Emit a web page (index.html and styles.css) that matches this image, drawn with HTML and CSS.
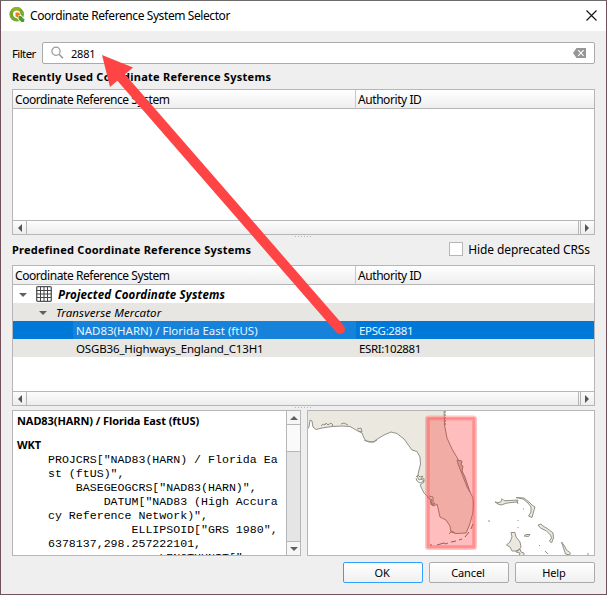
FILE: index.html
```html
<!DOCTYPE html>
<html lang="en">
<head>
<meta charset="utf-8">
<title>Coordinate Reference System Selector</title>
<link rel="stylesheet" href="styles.css">
</head>
<body>
<div class="dialog">
  <header class="titlebar">
    <svg class="logo" width="16" height="16" viewBox="0 0 16 16"><circle cx="7.7" cy="7.3" r="5.5" fill="none" stroke="#75a82b" stroke-width="3.6"/><path d="M3.2 3.5A5.8 5.8 0 0 1 11 2.7" fill="none" stroke="#93b023" stroke-width="3"/><path d="M7.500 7.500h4l4 4v4h-3.500l-4.500-4.500z" fill="#fff"/><path d="M9.500 9h2.500l3.200 3.200v2.800h-2.800L9.500 12z" fill="#589632"/><path d="M6.500 5.500h3.600l1.200 3H9v2.300l-2.500-1.600z" fill="#ee7913"/></svg>
    <span class="title">Coordinate Reference System Selector</span>
    <svg class="close" width="11" height="11" viewBox="0 0 11 11"><path d="M.5.5l10 10M10.500.5l-10 10" stroke="#111" stroke-width="1.1"/></svg>
  </header>
  <main>
    <div class="filter-row">
      <label class="filter-label">Filter</label>
      <div class="filter">
        <svg width="14" height="14" viewBox="0 0 14 14"><circle cx="5" cy="5.300" r="4.100" fill="none" stroke="#999" stroke-width="1.2"/><path d="M8 8.300l4 4" stroke="#999" stroke-width="1.6"/></svg>
        <span class="query">2881</span>
        <svg width="13" height="10" viewBox="0 0 13 10"><path d="M0 5l3.500-5H13v10H3.500z" fill="#969696"/><path d="M5.200 2.200l5.400 5.600M10.600 2.200L5.200 7.800" stroke="#fff" stroke-width="1.1"/></svg>
      </div>
    </div>
    <h2 class="heading recent-heading"><span>Recently Used Coordinate Reference Systems</span></h2>
    <section class="table recent">
      <div class="thead"><span>Coordinate Reference System</span><span>Authority ID</span></div>
      <div class="tbody"></div>
      <div class="hscroll"><i class="cell"><b class="left"></b></i><i class="thumb"></i><i class="cell"><b class="right"></b></i></div>
    </section>
    <div class="splitter"></div>
    <div class="predefined-row">
      <h2 class="heading"><span class="predefined">Predefined Coordinate Reference Systems</span></h2>
      <label class="hide"><i class="box"></i><span>Hide deprecated CRSs</span></label>
    </div>
    <section class="table all">
      <div class="thead"><span>Coordinate Reference System</span><span>Authority ID</span></div>
      <div class="tbody">
        <div class="row group"><b class="down"></b>
          <svg width="16" height="16" viewBox="0 0 16 16"><rect x=".7" y=".7" width="14.6" height="14.6" rx="1" fill="#fff" stroke="#555" stroke-width="1.3"/><path d="M4.500 1v14M8 1v14M11.500 1v14M1 4.500h14M1 8h14M1 11.500h14" stroke="#444"/></svg>
          <span>Projected Coordinate Systems</span></div>
        <div class="row alt sub"><b class="down"></b><span>Transverse Mercator</span></div>
        <div class="row item selected"><span class="name"><em class="florida">NAD83(HARN) / Florida East (ftUS)</em></span><span class="auth"><em class="epsg">EPSG:2881</em></span></div>
        <div class="row item alt"><span class="name"><em class="osgb">OSGB36_Highways_England_C13H1</em></span><span class="auth"><em class="esri">ESRI:102881</em></span></div>
      </div>
      <div class="hscroll"><i class="cell"><b class="left"></b></i><i class="thumb"></i><i class="cell"><b class="right"></b></i></div>
    </section>
    <div class="splitter low"></div>
    <div class="details">
      <section class="wkt">
        <div class="wkt-text">
          <h3 class="crs-name">NAD83(HARN) / Florida East (ftUS)</h3>
          <h3 class="wkt-title">WKT</h3>
<pre>PROJCRS["NAD83(HARN) / Florida Ea
st (ftUS)",
    BASEGEOGCRS["NAD83(HARN)",
        DATUM["NAD83 (High Accura
cy Reference Network)",
            ELLIPSOID["GRS 1980",
6378137,298.257222101,
                LENGTHUNIT["</pre>
        </div>
        <div class="vscroll"><i class="vcell"><b class="up"></b></i><i class="vthumb"></i><i class="track"></i><i class="vcell bottom"><b class="down"></b></i></div>
      </section>
      <svg class="map" width="288" height="146" viewBox="307 410 288 146">
        <g fill="#ebe9df" stroke="#929187" stroke-width="1" stroke-linejoin="round">
          <path d="M307 409L307 429.500 309 427 310 420 312 421 313 427 316 429.500 322 428 332 426.500 342 426 350 426.500 356 430 362 433 364 438 366 441 373 442 379 438 384 435 391 432 397 433.500 404 439 412 450 417 451.500 420 457 420.500 464 419 470 417.500 477 419 480 424 478.500 424 482 420 485 424 493 428 497 430 499 431 504 434 506 437 504 438 508 440 517 446 520 450 526 451 532 456 533.500 466 533 469 526 471 520 473 512 473.500 503 473 498 469 490 465 479 461 468 459 461 452 449 447 438 444.500 425 444 409z"/>
          <path d="M321 426l2-2 2 1 1-2 2 2 3-2 2 2-2 2M341 424l3-1 4 2M357 429l4-1 1 4-4-1M364 440l5 2h5l3-2M416 477l2-2 2 2 3-1-2 3 3 2-4 2-3-2-1-3M427 497l5 3-1 5 4-2M429 496l4 1v9l2-3M449 534l3-3 3 2" fill="none"/>
          <path d="M457 460l5 1-1 4 2 1-1 5 3 6 5 15-3-5-5-13-4-10z" fill="#c9c5b9"/>
          <path d="M445 411v14" fill="none" stroke-dasharray="2 1" stroke-width="1.500"/>
          <path d="M430 545h2m5 0l7-2 2 1 2-1m3-1l5-1m3-1l3-1m3-2l4-5m2-3l2-5" fill="none" stroke="#777"/>
          <path d="M495 502l3 2 3 1 6-2 10-1 1-2-8 .5-6 .2-2-2-1 3-3 1z"/>
          <path d="M516 497.500L524 498 529 502 532 505 535 507 533.500 512 532 517.500 528.500 516 531 512 531 507 528 503 523 499z"/>
          <path d="M511 532.500H515L516 537 520 542 521 547 518 551H512L510 547 506.500 545 510 542 512 537zM516 551l4-2 1 3 3 1v3h-5l1-3-4-1z"/>
          <path d="M524 536l2-1.500h4l-1.500 2zM538 525l3-1 2 2 5 3 5 4 .5 5-2 5-2-2 2-3-1-3-4-4-6-3zM561.500 542l3 4 2 4 4 3-1 2-4-1z"/>
          <path d="M489 520v2M517.500 520l1 1M518 527v1M523 509h1M539.500 545v1M545 551l3 3M587 554h2M517 501l1 3" fill="none"/>
        </g>
        <rect x="427.500" y="418" width="47" height="129.500" rx="1" fill="#f00" fill-opacity=".26"/>
        <rect x="427.500" y="418" width="47" height="129.500" rx="1" fill="none" stroke="#ff5b5b" stroke-opacity=".35" stroke-width="5"/>
        <rect x="427.500" y="418" width="47" height="129.500" fill="none" stroke="#ff5555" stroke-opacity=".35" stroke-width="2"/>
        <rect x="307.500" y="410.500" width="287" height="145" fill="none" stroke="#b6b6b6"/>
      </svg>
    </div>
    <div class="buttons"><button class="ok">OK</button><button>Cancel</button><button>Help</button></div>
  </main>
  <svg class="arrow" width="607" height="595" viewBox="0 0 607 595"><path d="M340 329L119 75" stroke="#fe4444" stroke-width="10" stroke-linecap="round"/><path d="M102 55l31 12.500L110 87z" fill="#fe4444"/></svg>
</div>
</body>
</html>
```
FILE: styles.css
```css
* { box-sizing: border-box; }
body { margin: 0; font-family: "Noto Sans", "Open Sans", sans-serif; font-size: 12px; color: #000; }
span, em { white-space: nowrap; }
em { font-style: normal; }
.dialog { position: relative; width: 607px; height: 595px; overflow: hidden; background: #efefef; border: 1px solid #70505a; border-top-color: #6b6b6b; }
.titlebar { display: flex; align-items: center; height: 30px; padding: 0 9px 2px 8px; background: #fff; }
.title { flex: 1; margin-left: 5px; font-size: 12px; letter-spacing: -.41px; }
main { padding: 11px 11px 0; }
.filter-row { display: flex; height: 22px; align-items: center; }
.filter-label { width: 30px; letter-spacing: -.6px; font-size: 11.5px; }
.filter { flex: 1; height: 22px; display: flex; align-items: center; background: #fff; border: 1px solid #ababab; border-radius: 2px; padding: 0 8px; }
.query { flex: 1; margin-left: 6px; font-size: 11px; letter-spacing: -.2px; }
.heading { margin: 0; font-size: 11px; line-height: 25px; font-weight: 700; letter-spacing: .27px; }
.recent-heading { height: 25px; }
.predefined { letter-spacing: .24px; }
.table { display: flex; flex-direction: column; border: 1px solid #b6b6b6; background: #fff; }
.recent { height: 146px; }
.all { height: 141px; }
.thead { height: 19px; display: grid; grid-template-columns: 343px 1fr; border-bottom: 1px solid #b6b6b6; background: linear-gradient(#fff, #eee); line-height: 19px; letter-spacing: -.43px; }
.thead span { padding-left: 2px; }
.thead span:first-child { border-right: 1px solid #c8c8c8; }
.tbody { flex: 1; }
.hscroll { height: 14px; display: grid; grid-template-columns: 13px 1fr 14px; border-top: 1px solid #b6b6b6; background: linear-gradient(#fcfcfc, #ededed); }
.cell { display: flex; align-items: center; justify-content: center; }
.thumb { border: solid #b6b6b6; border-width: 0 1px; margin-right: 1px; }
.cell:last-child { border-left: 1px solid #b6b6b6; padding-right: 2px; }
.left, .right { border: solid transparent; border-width: 4px 0; }
.left { border-right: 4px solid #555; }
.right { border-left: 4px solid #555; }
.up, .down { width: 0; border: solid transparent; border-width: 0 4px; }
.down { border-top: 4px solid #606060; }
.up { border-bottom: 4px solid #606060; }
.splitter { width: 17px; height: 3px; margin: 0 auto; background: repeating-linear-gradient(90deg, #b5b5b5 0 1px, transparent 1px 3px) 0 1px / 17px 1px no-repeat; }
.predefined-row { height: 27px; display: flex; justify-content: space-between; align-items: center; padding-bottom: 5px; }
.hide { display: flex; align-items: center; gap: 5px; padding-right: 5px; font-size: 12px; letter-spacing: -.1px; }
.box { width: 14px; height: 14px; background: #fff; border: 1px solid #b6b6b6; }
.row { height: 18px; display: flex; align-items: center; line-height: 18px; padding-top: 1px; }
.alt { background: #e8e6e2; }
.group { padding-left: 6px; font-weight: 700; font-style: italic; font-size: 11.5px; letter-spacing: .17px; }
.group svg { margin: -1px 6px 0 9px; }
.sub { padding-left: 26px; font-style: italic; font-size: 11.5px; letter-spacing: .1px; }
.sub span { margin-left: 9px; }
.item { display: grid; grid-template-columns: 343px 1fr; font-size: 11.5px; padding-top: 0; line-height: 20px; }
.florida { letter-spacing: -.01px; }
.osgb { letter-spacing: -.15px; }
.epsg { letter-spacing: -.35px; }
.esri { letter-spacing: -.4px; }
.name { height: 18px; padding-left: 63px; }
.auth { height: 18px; padding-left: 3px; }
.selected { background: #0078d7; color: #e8f4ff; }
.selected .name { background: linear-gradient(90deg, transparent 60px, #1682da 60px); }
.low { height: 4px; }
.details { display: grid; grid-template-columns: 289px 288px; gap: 6px; height: 146px; }
.wkt { display: grid; grid-template-columns: 1fr 14px; border: 1px solid #b6b6b6; background: #fff; overflow: hidden; }
.wkt-text { height: 144px; overflow: hidden; padding: 2px 0 0 4px; }
.wkt h3 { margin: 0; font-size: 11px; line-height: 16px; white-space: nowrap; letter-spacing: -.08px; }
.wkt .wkt-title { margin-top: 8px; }
.wkt pre { margin: 0 0 0 31px; font: 11.6px/14px "Liberation Mono", monospace; }
.vscroll { display: grid; grid-template-rows: 13px 28px 1fr 14px; border-left: 1px solid #b6b6b6; background: #f6f6f6; }
.vcell { display: flex; align-items: center; justify-content: center; }
.vthumb { border: solid #b6b6b6; border-width: 1px 0; background: #fafafa; }
.track { background: #e5e5e5; }
.bottom { border-top: 1px solid #b6b6b6; }
.map { display: block; background: #fff; }
.buttons { display: flex; justify-content: flex-end; gap: 6px; margin-top: 6px; }
button { width: 80px; height: 21px; padding: 0 2px 0 0; border: 1px solid #ababab; border-radius: 2px; background: linear-gradient(#fff, #f0f0f0); font: 11px "Noto Sans", sans-serif; letter-spacing: -.1px; color: #000; }
.ok { border-color: #30a0ff; }
.arrow { position: absolute; left: -1px; top: -1px; }
```
